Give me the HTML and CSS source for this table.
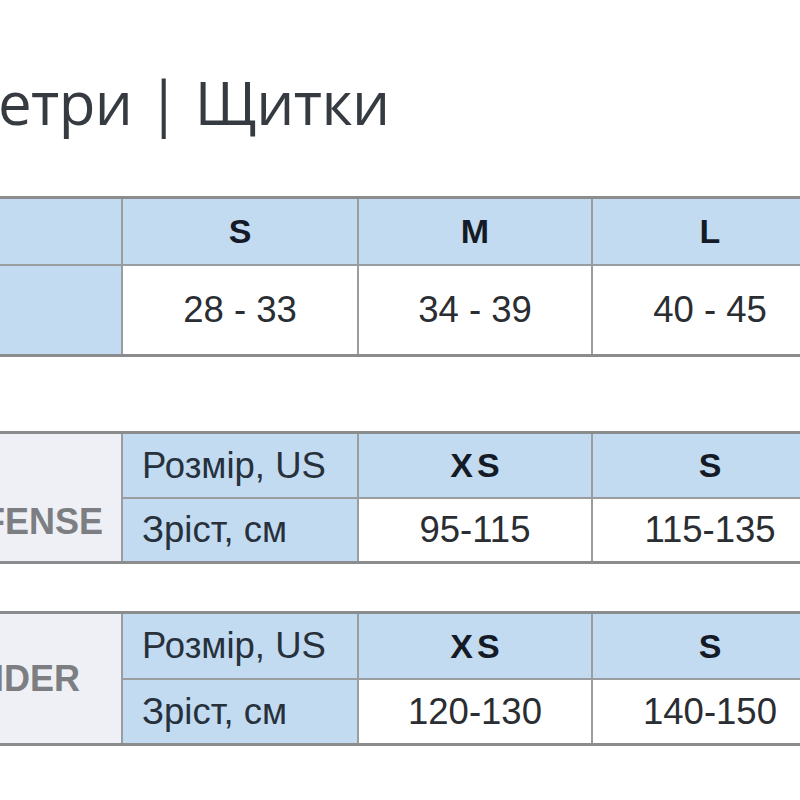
FILE: index.html
```html
<!DOCTYPE html>
<html lang="uk">
<head>
<meta charset="utf-8">
<title>Параметри | Щитки</title>
<link rel="stylesheet" href="styles.css">
</head>
<body>
<div class="page">
  <h1 class="title">етри | Щитки</h1>

  <div class="chart chart-main">
    <div class="cell side"></div>
    <div class="cell head">S</div>
    <div class="cell head">M</div>
    <div class="cell head">L</div>
    <div class="cell side"></div>
    <div class="cell data">28 - 33</div>
    <div class="cell data">34 - 39</div>
    <div class="cell data">40 - 45</div>
  </div>

  <div class="chart chart-a">
    <div class="cell label label-a"><span>DEFENSE</span></div>
    <div class="cell key">Розмір, US</div>
    <div class="cell head spaced">XS</div>
    <div class="cell head">S</div>
    <div class="cell key">Зріст, см</div>
    <div class="cell data">95-115</div>
    <div class="cell data">115-135</div>
  </div>

  <div class="chart chart-b">
    <div class="cell label label-b"><span>SLIDER</span></div>
    <div class="cell key">Розмір, US</div>
    <div class="cell head spaced">XS</div>
    <div class="cell head">S</div>
    <div class="cell key">Зріст, см</div>
    <div class="cell data">120-130</div>
    <div class="cell data">140-150</div>
  </div>
</div>
</body>
</html>
```

FILE: styles.css
```css
html, body {
  margin: 0;
  padding: 0;
  background: #ffffff;
  overflow: hidden;
}

.page {
  width: 1000px;
  padding-top: 62px;
  font-family: "Liberation Sans", Arial, sans-serif;
}

.title {
  margin: 0 0 54px -2px;
  height: 80px;
  font-family: "Open Sans", "Noto Sans", sans-serif;
  font-weight: 400;
  font-size: 60px;
  letter-spacing: -0.6px;
  line-height: 80px;
  color: #363b41;
  white-space: nowrap;
}

.chart {
  display: grid;
  grid-template-columns: 121px 234px 232px 234px;
  column-gap: 2px;
  row-gap: 2px;
  background: #9a9da0;
  border-top: 3px solid #8a8c8e;
  border-bottom: 3px solid #8a8c8e;
}

.chart-main {
  grid-template-rows: 65px 88px;
  margin-bottom: 74px;
}

.chart-a {
  grid-template-rows: 63px 62px;
  margin-bottom: 47px;
}

.chart-b {
  grid-template-rows: 64px 63px;
}

.cell {
  display: flex;
  align-items: center;
  justify-content: center;
  font-size: 36.5px;
  color: #2a2d31;
  background: #ffffff;
  white-space: nowrap;
}

.head {
  background: #c3dbf1;
  font-weight: 700;
  font-size: 34px;
  color: #141b26;
}

.spaced {
  letter-spacing: 4px;
  padding-left: 4px;
}

.side {
  background: #c3dbf1;
}

.key {
  background: #c3dbf1;
  justify-content: flex-start;
  padding-left: 19px;
  color: #26313c;
}

.data {
  background: #ffffff;
}

.label {
  grid-row: span 2;
  background: #eef0f5;
  overflow: hidden;
  justify-content: flex-end;
  font-weight: 700;
  font-size: 36px;
  color: #7c7e82;
}

.label-a {
  padding-right: 18px;
  padding-top: 48px;
}

.label-b {
  padding-right: 41px;
}
```
